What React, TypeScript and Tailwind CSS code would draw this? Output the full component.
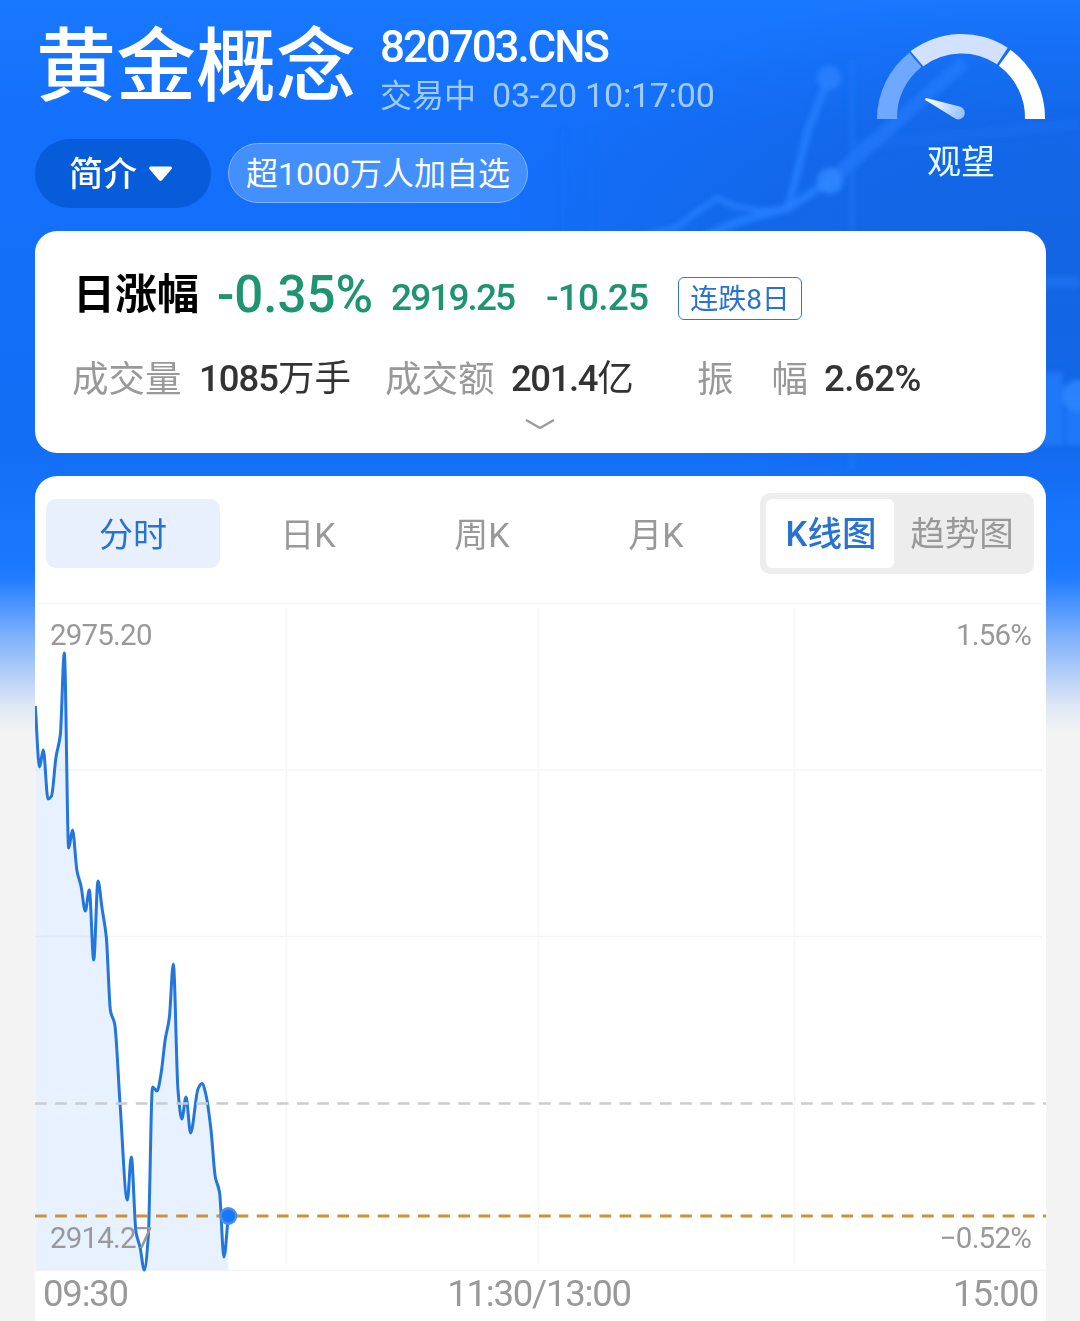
import { useState } from "react";
import clsx from "clsx";

type Point = [number, number];

const periods = ["分时", "日K", "周K", "月K"];
const chartModes = ["K线图", "趋势图"];

const prices: Point[] = [
    [35.3, 706],
    [39.5, 767],
    [43.3, 750],
    [48, 799],
    [51.5, 796],
    [56, 757],
    [60.3, 735],
    [64.3, 653],
    [68.7, 848],
    [72.5, 830],
    [77, 871],
    [81, 886],
    [85.3, 911],
    [89.3, 890],
    [93.7, 960],
    [98, 881],
    [102, 908],
    [106.3, 937],
    [110.5, 1011],
    [114.7, 1024],
    [120, 1103],
    [127.3, 1200],
    [131.3, 1157],
    [136, 1232],
    [140, 1247],
    [144.3, 1270],
    [148.3, 1236],
    [152.5, 1087],
    [157, 1091],
    [161, 1074],
    [165.3, 1039],
    [169.3, 1018],
    [173.3, 964],
    [178, 1090],
    [181.8, 1119],
    [186, 1097],
    [190.6, 1133],
    [198, 1089],
    [202, 1083.5],
    [206, 1095],
    [211, 1130],
    [215.3, 1177],
    [219.5, 1192],
    [223.9, 1257],
    [228.3, 1216],
];

// Monotone cubic: tangents go flat at every local high and low
function smoothPath(points: Point[]) {
    const slopes = points.slice(1).map(([x, y], i) => (y - points[i][1]) / (x - points[i][0]));
    const tangents = points.map((_, i) => {
        if (i === 0) return slopes[0];
        if (i === points.length - 1) return slopes[slopes.length - 1];
        const a = slopes[i - 1];
        const b = slopes[i];
        return a * b <= 0 ? 0 : (2 * a * b) / (a + b);
    });

    return points
        .map(([x, y], i) => {
            if (i === 0) return `M${x} ${y}`;
            const [px, py] = points[i - 1];
            const h = (x - px) / 3;
            return `C${px + h} ${py + tangents[i - 1] * h} ${x - h} ${y - tangents[i] * h} ${x} ${y}`;
        })
        .join("");
}

const linePath = smoothPath(prices);

function Backdrop() {
    return (
        <div className="absolute inset-x-0 top-0 h-[740px] overflow-hidden bg-[linear-gradient(180deg,#1878ff_0px,#146ffa_130px,#136ef6_450px,#1a78ff_560px,#1f7bff_576px,#4a94ff_604px,#84b4fa_640px,#b0ccf8_672px,#dce6f5_704px,#f3f3f3_732px)]">
            <div className="absolute top-0 right-0 h-[500px] w-[560px] bg-[radial-gradient(ellipse_at_95%_50%,#1262dccc_0%,#1262dc88_40%,transparent_74%)]" />
            <svg className="absolute inset-0" width="1080" height="560" fill="none">
                <defs>
                    <filter id="soft" x="-20%" y="-20%" width="140%" height="140%">
                        <feGaussianBlur stdDeviation="2.5" />
                    </filter>
                </defs>
                <g filter="url(#soft)" stroke="#2780ff" strokeLinejoin="round">
                    <path d="M642 236 675 228 697 212 717 198 734 206 765 211 788 208" strokeWidth="6" opacity=".8" />
                    <path d="M704 236 740 221 788 208 830 181" strokeWidth="8" opacity=".85" />
                    <path d="M788 208 808 130 827 82" strokeWidth="8" opacity=".8" />
                    <path d="M830 181 890 127 965 62" strokeWidth="14" opacity=".55" />
                    <path d="M852 60V470" strokeWidth="7" opacity=".25" />
                    <path d="M563 130V236M590 130V236" strokeWidth="4" opacity=".2" />
                    <path d="M850 146 1080 124" strokeWidth="12" opacity=".14" />
                    <path d="M1040 282H1080" strokeWidth="12" opacity=".35" />
                    <path d="M1053 372V445M1076 400V445" strokeWidth="20" opacity=".65" />
                    <circle cx="829" cy="78" r="12" fill="#2780ff" stroke="none" opacity=".9" />
                    <circle cx="830" cy="181" r="13" fill="#2f86ff" stroke="none" opacity=".9" />
                    <circle cx="1078" cy="396" r="16" fill="#2f86ff" stroke="none" opacity=".85" />
                </g>
            </svg>
        </div>
    );
}

function Gauge() {
    return (
        <div className="flex w-[170px] flex-col items-center">
            <svg width="170" height="88" viewBox="876 33 170 88">
                <defs>
                    <linearGradient id="needle" x1="925" y1="98" x2="965" y2="116" gradientUnits="userSpaceOnUse">
                        <stop offset=".2" stopColor="#f2f8ff" />
                        <stop offset="1" stopColor="#8fbcff" />
                    </linearGradient>
                </defs>
                <path d="M877 119A84 84 0 0 1 909.4 52.8L921.5 67A64 64 0 0 0 897 119Z" fill="#6ea8ff" />
                <path d="M910.6 51.2A84 84 0 0 1 1007.7 47.8L997 64.2A64 64 0 0 0 923.3 66.2Z" fill="#d1e1ff" />
                <path d="M1010.5 49.8A84 84 0 0 1 1045 119H1025A64 64 0 0 0 998.8 65.8Z" fill="#fff" />
                <path
                    d="M926.3 98 960.5 106.8A6.5 6.5 0 1 1 956 119L925.7 100.2A1.2 1.2 0 0 1 926.3 98Z"
                    fill="url(#needle)"
                />
            </svg>
            <span className="mt-[24px] text-[34px] leading-none text-[#e6fbff]">观望</span>
        </div>
    );
}

function Header() {
    return (
        <header className="flex h-[231px] items-start justify-between pr-[34px] pl-[35px]">
            <div>
                <div className="flex h-[139px]">
                    <h1 className="mt-[27px] w-[345px] pl-[1px] text-[80px] leading-none font-medium whitespace-nowrap">
                        黄金概念
                    </h1>
                    <div className="pt-[25px] whitespace-nowrap">
                        <p className="text-[44px] leading-none font-medium tracking-[-2.1px]">820703.CNS</p>
                        <p className="mt-[9px] flex items-baseline text-[32px] leading-none text-[#9fcbff]">
                            <span className="w-[112px]">交易中</span>
                            <span className="text-[34px] tracking-[-0.2px]">03-20 10:17:00</span>
                        </p>
                    </div>
                </div>
                <div className="flex items-start gap-[17px]">
                    <button className="flex h-[69px] w-[176px] items-center rounded-full bg-[#075cd9] pl-[34px] text-left text-[34px] leading-none font-medium">
                        <span className="w-[80px]">简介</span>
                        <svg width="23" height="16" viewBox="0 0 23 16" fill="currentColor">
                            <path d="M2 .5h19c1.9 0 2.5 1.500 1.400 2.800L13 14.200c-.9 1-2.100 1-3 0L.6 3.300C-.5 2 .1.500 2 .5Z" />
                        </svg>
                    </button>
                    <span className="mt-[4px] flex h-[60px] w-[300px] items-center justify-center rounded-full border border-[#7fb6ff] bg-[#438ffb] pt-[2px] text-[32px] leading-none whitespace-nowrap">
                        超1000万人加自选
                    </span>
                </div>
            </div>
            <div className="pt-[33px]">
                <Gauge />
            </div>
        </header>
    );
}

function Summary() {
    return (
        <section className="mr-[34px] ml-[35px] h-[222px] rounded-[22px] bg-white pt-[37px] pl-[37px] whitespace-nowrap">
            <div className="flex h-[53px] items-center leading-none">
                <h2 className="w-[145px] pl-[1px] text-[42px] font-bold text-black">日涨幅</h2>
                <span className="w-[174px] text-[51px] font-medium text-[#1f9470]">-0.35%</span>
                <span className="mt-[6px] w-[155px] text-[37px] font-medium tracking-[-1.9px] text-[#1f9470]">
                    2919.25
                </span>
                <span className="mt-[6px] w-[132px] text-[37px] font-medium tracking-[-0.8px] text-[#1f9470]">
                    -10.25
                </span>
                <span className="mt-[7px] flex h-[43px] w-[124px] items-center justify-center rounded-md border border-[#2f78c8] pt-[3px] text-[28px] text-[#2873d2]">
                    连跌8日
                </span>
            </div>
            <div className="mt-[36px] flex h-[44px] items-center text-[36.5px] leading-none text-[#333]">
                <span className="w-[127px] pt-[2px] text-[#999]">成交量</span>
                <span className="w-[186px]">
                    <b className="font-medium tracking-[-1px]">1085</b>万手
                </span>
                <span className="w-[126px] pt-[2px] text-[#999]">成交额</span>
                <span className="w-[186px]">
                    <b className="font-medium tracking-[-1.4px]">201.4</b>亿
                </span>
                <span className="flex w-[111px] justify-between pt-[2px] text-[#999]">
                    <i className="not-italic">振</i>
                    <i className="not-italic">幅</i>
                </span>
                <b className="ml-[16px] font-medium tracking-[-0.5px]">2.62%</b>
            </div>
            <svg className="mt-[17px] ml-[453px]" width="30" height="14" fill="none" stroke="#999" strokeWidth="2.2">
                <path d="M1 2 15 10 29 2" />
            </svg>
        </section>
    );
}

function Chart() {
    return (
        <div className="relative h-[675px] text-[29.5px] leading-none tracking-[-0.8px] text-[#999]">
            <svg className="block" width="1011" height="675" viewBox="35 600 1011 675" fill="none">
                <path d="M38 603.5H1042M35 770H1042M35 936.5H1042M35 1270.5H1046" stroke="#f3f5f5" strokeWidth="1.6" />
                <path d="M286.5 608V1264M538.5 608V1264M794.5 608V1264" stroke="#f5f6f6" strokeWidth="1.5" />
                <path d={`${linePath}V1270H35.3Z`} fill="#1677ff" fillOpacity=".1" />
                <path d={linePath} stroke="#2276dc" strokeWidth="3" strokeLinejoin="round" />
                <path d="M35 1103.5H1046" stroke="#cacccd" strokeWidth="2.6" strokeDasharray="11.7 8.46" />
                <path d="M35 1216H1046" stroke="#cc9237" strokeWidth="3" strokeDasharray="11.7 8.46" />
                <circle cx="228.3" cy="1216" r="9" fill="#4a90e8" />
                <circle cx="228.3" cy="1216" r="6.5" fill="#1677ff" />
            </svg>
            <div className="absolute inset-0 flex flex-col justify-between pt-[21px] pr-[15px] pb-[22px] pl-[15px]">
                <div className="flex justify-between">
                    <span>2975.20</span>
                    <span>1.56%</span>
                </div>
                <div className="flex justify-between">
                    <span>2914.27</span>
                    <span>−0.52%</span>
                </div>
            </div>
        </div>
    );
}

export default function App() {
    const [period, setPeriod] = useState("分时");
    const [mode, setMode] = useState("K线图");

    return (
        <main className="relative h-[1321px] w-[1080px] overflow-hidden bg-[#f3f3f3] font-['Roboto','Noto_Sans_CJK_SC',sans-serif] text-white">
            <Backdrop />
            <div className="relative">
                <Header />
                <Summary />
                <section className="mt-[23px] mr-[34px] ml-[35px] h-[845px] rounded-t-[22px] bg-white">
                    <div className="flex h-[124px] items-start justify-between pt-[17px] pr-[12px] pl-[11px]">
                        <div className="mt-[6px] flex">
                            {periods.map((p) => (
                                <button
                                    key={p}
                                    onClick={() => setPeriod(p)}
                                    className={clsx(
                                        "h-[69px] w-[174px] rounded-[10px] pt-[2px] text-[34px] leading-none",
                                        p === period ? "bg-[#e7f0fc] text-[#2873d2]" : "pl-[2px] text-[#999]"
                                    )}
                                >
                                    {p}
                                </button>
                            ))}
                        </div>
                        <div className="flex h-[81px] w-[274px] rounded-[10px] bg-[#ededed] p-[6px]">
                            {chartModes.map((m) => (
                                <button
                                    key={m}
                                    onClick={() => setMode(m)}
                                    className={clsx(
                                        "h-[69px] rounded-md pt-[1px] pl-[2px] text-[34.5px] leading-none whitespace-nowrap",
                                        m === mode ? "w-[128px] bg-white font-medium text-[#2873d2]" : "w-[134px] text-[#999]"
                                    )}
                                >
                                    {m}
                                </button>
                            ))}
                        </div>
                    </div>
                    <Chart />
                    <div className="grid grid-cols-3 pt-[1px] pr-[8px] pl-[8px] text-[36.5px] leading-none tracking-[-1.2px] text-[#999]">
                        <span>09:30</span>
                        <span className="-ml-[3px] text-center">11:30/13:00</span>
                        <span className="text-right">15:00</span>
                    </div>
                </section>
            </div>
        </main>
    );
}
